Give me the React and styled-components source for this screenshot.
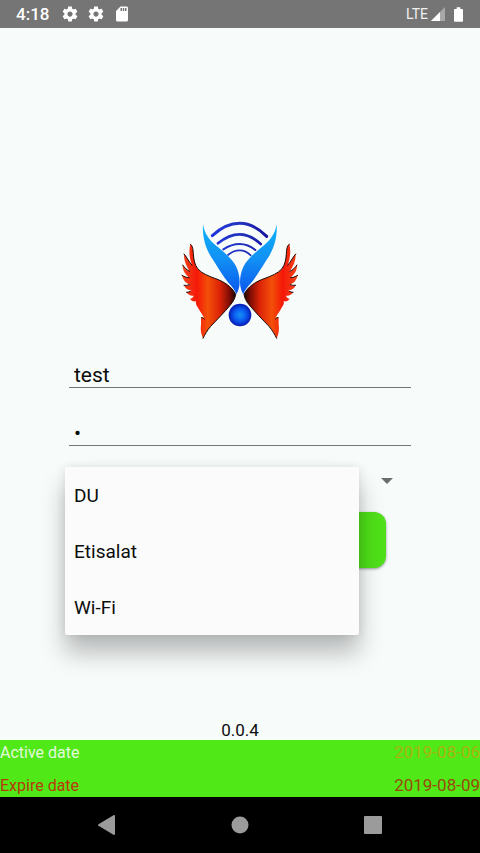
import React, { useState } from 'react';
import styled, { createGlobalStyle } from 'styled-components';

const networks = ['DU', 'Etisalat', 'Wi-Fi'];

const dates = [
  { label: 'Active date', value: '2019-08-06', color: '#e4f9dc', valueColor: '#a8b414' },
  { label: 'Expire date', value: '2019-08-09', color: '#b93a0a', valueColor: '#9a4a0a' },
];

function GearIcon() {
  return (
    <svg width='18' height='18' viewBox='0 0 24 24' fill='#fff'>
      <path d='M19.43 12.98c.04-.32.07-.64.07-.98s-.03-.66-.07-.98l2.11-1.65c.19-.15.24-.42.12-.64l-2-3.46c-.12-.22-.39-.3-.61-.22l-2.49 1c-.52-.4-1.08-.73-1.69-.98l-.38-2.65C14.46 2.18 14.25 2 14 2h-4c-.25 0-.46.18-.49.42l-.38 2.65c-.61.25-1.17.59-1.69.98l-2.49-1c-.23-.09-.49 0-.61.22l-2 3.46c-.13.22-.07.49.12.64l2.11 1.65c-.04.32-.07.65-.07.98s.03.66.07.98l-2.11 1.65c-.19.15-.24.42-.12.64l2 3.46c.12.22.39.3.61.22l2.49-1c.52.4 1.08.73 1.69.98l.38 2.65c.03.24.24.42.49.42h4c.25 0 .46-.18.49-.42l.38-2.65c.61-.25 1.17-.59 1.69-.98l2.49 1c.23.09.49 0 .61-.22l2-3.46c.12-.22.07-.49-.12-.64l-2.11-1.65zM12 15.5c-1.93 0-3.5-1.57-3.5-3.5s1.57-3.5 3.5-3.5 3.5 1.57 3.5 3.5-1.57 3.5-3.5 3.5z' />
    </svg>
  );
}

function SdCardIcon() {
  return (
    <svg width='18' height='18' viewBox='0 0 24 24' fill='#fff'>
      <path d='M18 2h-8L4.02 8 4 20c0 1.100.9 2 2 2h12c1.100 0 2-.9 2-2V4c0-1.100-.9-2-2-2zm-6 6h-2V4h2v4zm3 0h-2V4h2v4zm3 0h-2V4h2v4z' />
    </svg>
  );
}

function SignalIcon() {
  return (
    <svg width='14' height='14' viewBox='0 0 14 14'>
      <path d='M14 0V14H0Z' fill='#a8a8a8' />
      <path d='M9 5V14H0Z' fill='#fff' />
    </svg>
  );
}

function BatteryIcon() {
  return (
    <svg width='9' height='15' viewBox='0 0 10 16' fill='#fff'>
      <path d='M3 0H7V2H9Q10 2 10 3V15Q10 16 9 16H1Q0 16 0 15V3Q0 2 1 2H3Z' />
    </svg>
  );
}

function Half() {
  return (
    <>
      <path
        d='M99 37C103 62 115 82 136 99C158 117 186 139 198 163C207 181 211 204 208 222C206 233 203 240 199 247C194 232 186 224 175 212C160 194 145 169 130 145C112 120 96 84 99 37Z'
        fill='url(#feather)'
      />
      <path
        d='M61 96C67 99 69 109 70 125C71 143 74 158 83 170C96 185 114 191 134 199C161 208 186 224 197 247C195 258 191 268 181 279C163 301 142 322 122 343C112 355 105 367 99 379C93 365 91 353 93 339C94 331 92 324 94 317C98 315 101 317 103 320C98 306 91 300 84 287C79 279 76 274 78 267C71 270 65 267 60 260C66 259 69 256 71 251C63 253 55 249 49 240C56 241 61 239 64 235C54 235 46 230 42 220C50 222 56 221 60 217C48 215 39 205 36 189C44 195 51 197 57 197C45 186 37 175 38 158C44 168 51 174 60 179C49 164 41 145 42 125C49 133 55 147 66 160C58 139 56 115 61 96Z'
        fill='url(#wing)'
        strokeLinejoin='round'
      />
      <path
        d='M61 97C67 99 69 109 70 125C71 143 74 158 83 170C96 185 114 191 134 199C161 208 186 224 197 247C195 258 191 268 181 279C163 301 142 322 122 343C112 355 105 367 99 379M42 126C49 133 55 147 66 160M38 159C44 168 51 174 59 178M36 190C44 195 51 197 57 197M42 220Q50 222 58 218M50 241Q56 241 61 238M94 317Q99 315 103 321'
        fill='none'
        stroke='#1c0b08'
        strokeWidth='3'
        strokeLinecap='round'
      />
    </>
  );
}

function Logo() {
  return (
    <svg width='140' height='135' viewBox='0 0 420 405'>
      <defs>
        <linearGradient id='feather' x1='0' y1='0' x2='0' y2='1'>
          <stop offset='0' stopColor='#0cb4f6' />
          <stop offset='0.5' stopColor='#1290f4' />
          <stop offset='1' stopColor='#0a55ec' />
        </linearGradient>
        <linearGradient id='wing' gradientUnits='userSpaceOnUse' x1='36' y1='0' x2='197' y2='0'>
          <stop offset='0' stopColor='#f4471b' />
          <stop offset='0.28' stopColor='#f51808' />
          <stop offset='0.48' stopColor='#f25008' />
          <stop offset='0.7' stopColor='#dd2408' />
          <stop offset='0.88' stopColor='#800d04' />
          <stop offset='1' stopColor='#160202' />
        </linearGradient>
        <linearGradient id='arc' gradientUnits='userSpaceOnUse' x1='127' y1='0' x2='290' y2='0'>
          <stop offset='0' stopColor='#1e35dc' />
          <stop offset='0.5' stopColor='#2334c0' />
          <stop offset='1' stopColor='#1712a0' />
        </linearGradient>
        <radialGradient id='ball'>
          <stop offset='0' stopColor='#1593f6' />
          <stop offset='0.55' stopColor='#0b59ee' />
          <stop offset='1' stopColor='#0719b4' />
        </radialGradient>
      </defs>
      <g fill='none' stroke='url(#arc)' strokeLinecap='round'>
        <path d='M127 71Q167 34 209 34T290 73' strokeWidth='9' />
        <path d='M144 94Q177 67 209 67T272 96' strokeWidth='8' />
        <path d='M160 112Q184 96 209 96T256 114' strokeWidth='6' />
        <path d='M174 129Q190 115 209 115T242 130' strokeWidth='5' />
      </g>
      <Half />
      <g transform='translate(419 0) scale(-1 1)'>
        <Half />
      </g>
      <circle cx='210' cy='309' r='34' fill='url(#ball)' />
    </svg>
  );
}

function App() {

  const [ user, setUser ] = useState('test');
  const [ password, setPassword ] = useState('1');
  const [ network, setNetwork ] = useState('DU');
  const [ menuOpen, setMenuOpen ] = useState(true);

  const pick = (name) => {
    setNetwork(name);
    setMenuOpen(false);
  };

  return (
    <Container>
      <GlobalStyle />
      <StatusBar>
        <Clock>4:18</Clock>
        <Notifications>
          <GearIcon />
          <GearIcon />
          <SdCardIcon />
        </Notifications>
        <Carrier>LTE</Carrier>
        <SignalIcon />
        <Battery>
          <BatteryIcon />
        </Battery>
      </StatusBar>

      <Main>
        <Logo />
        <Form onSubmit={(e) => e.preventDefault()}>
          <Field aria-label='User name' value={user} onChange={(e) => setUser(e.target.value)} />
          <Field aria-label='Password' type='password' value={password} onChange={(e) => setPassword(e.target.value)} />
          <Spinner>
            <Select
              aria-label='Network'
              value={network}
              onChange={(e) => setNetwork(e.target.value)}
            >
              {networks.map(name => <option key={name}>{name}</option>)}
            </Select>
            <svg width='12' height='6' viewBox='0 0 12 6'>
              <path d='M0 0H12L6 6Z' fill='#6c6e6e' />
            </svg>
            { menuOpen && <Menu>
              {networks.map(name => (
                <MenuItem key={name} type='button' onClick={() => pick(name)}>{name}</MenuItem>
              ))}
            </Menu> }
          </Spinner>
          <LoginButton aria-label='Login' />
        </Form>
        <Version>0.0.4</Version>
      </Main>

      <Dates>
        {dates.map(date => (
          <DateRow key={date.label} $color={date.color}>
            <dt>{date.label}</dt>
            <DateValue $color={date.valueColor}>{date.value}</DateValue>
          </DateRow>
        ))}
      </Dates>

      <NavBar>
        <NavButton aria-label='Back'>
          <svg width='18' height='20' viewBox='0 0 18 20'>
            <path d='M16 1V19L1 10Z' fill='#9b9b9b' stroke='#9b9b9b' strokeWidth='2' strokeLinejoin='round' />
          </svg>
        </NavButton>
        <NavButton aria-label='Home'>
          <svg width='18' height='18' viewBox='0 0 18 18'>
            <circle cx='9' cy='9' r='8.500' fill='#9b9b9b' />
          </svg>
        </NavButton>
        <NavButton aria-label='Recent apps'>
          <svg width='18' height='18' viewBox='0 0 18 18'>
            <rect width='18' height='18' rx='1' fill='#9b9b9b' />
          </svg>
        </NavButton>
      </NavBar>
    </Container>
  );
}

export default App;

const GlobalStyle = createGlobalStyle`
  * {
    box-sizing: border-box;
  }

  body {
    margin: 0;
    background: #f7fbfa;
  }

  body, input, button, select {
    font-family: Roboto, sans-serif;
  }

  svg {
    display: block;
    flex-shrink: 0;
  }
`;

const Container = styled.div`
  display: flex;
  flex-direction: column;
  min-height: 100vh;
  color: #0b0c0c;
`;

const StatusBar = styled.header`
  display: flex;
  align-items: center;
  height: 28px;
  padding: 0 17px 0 16px;
  background: #757575;
  color: #fff;
`;

const Clock = styled.span`
  font-size: 17px;
  font-weight: 500;
  line-height: 28px;
`;

const Notifications = styled.div`
  display: flex;
  gap: 8px;
  flex: 1;
  padding-left: 12px;
`;

const Carrier = styled.span`
  margin-right: 3px;
  font-size: 14px;
  line-height: 28px;
  color: #f0f0f0;
`;

const Battery = styled.span`
  padding-left: 9px;
`;

const Main = styled.main`
  display: flex;
  flex: 1;
  flex-direction: column;
  align-items: center;
  padding-top: 184px;
`;

const Form = styled.form`
  display: flex;
  flex-direction: column;
  align-self: stretch;
  padding: 1px 65px 0;
`;

const Field = styled.input`
  height: 40px;
  margin: 0 4px 18px;
  padding: 14px 5px 0;
  border: 0;
  border-bottom: 1px solid #737676;
  border-radius: 0;
  background: none;
  color: #0b0c0c;
  font-size: 21px;
  outline: none;
`;

const Spinner = styled.div`
  position: relative;
  display: flex;
  align-items: center;
  height: 28px;
  margin: 3px 0 17px;
  padding-right: 22px;
`;

const Select = styled.select`
  flex: 1;
  padding: 0 9px;
  border: 0;
  appearance: none;
  background: none;
  font-size: 19px;
`;

const Menu = styled.div`
  position: absolute;
  top: 0;
  left: 0;
  width: 84%;
  display: flex;
  flex-direction: column;
  border-radius: 2px;
  background: #fbfbfb;
  box-shadow: 0 18px 24px rgba(0, 0, 0, 0.26), 0 0 10px rgba(0, 0, 0, 0.1);
`;

const MenuItem = styled.button`
  height: 56px;
  padding: 0 9px;
  border: 0;
  background: none;
  color: #0b0c0c;
  font-size: 19px;
  text-align: left;
`;

const LoginButton = styled.button`
  height: 56px;
  margin: 0 29px;
  border: 0;
  border-radius: 12px;
  background: #4fe019;
  box-shadow: 0 1px 3px rgba(0, 0, 0, 0.4);
`;

const Version = styled.p`
  margin: auto 0 0;
  font-size: 17px;
  line-height: 20px;
`;

const Dates = styled.dl`
  display: flex;
  flex-direction: column;
  gap: 10px;
  margin: 0;
  padding-top: 1px;
  background: #50e817;
`;

const DateRow = styled.div`
  display: flex;
  justify-content: space-between;
  color: ${props => props.$color};
  font-size: 16px;
  line-height: 23px;
`;

const DateValue = styled.dd`
  margin: 0;
  color: ${props => props.$color};
  font-size: 17px;
`;

const NavBar = styled.nav`
  display: flex;
  align-items: center;
  justify-content: center;
  gap: 77px;
  height: 56px;
  background: #000;
`;

const NavButton = styled.button`
  display: flex;
  align-items: center;
  justify-content: center;
  width: 56px;
  height: 56px;
  padding: 0;
  border: 0;
  background: none;
`;
